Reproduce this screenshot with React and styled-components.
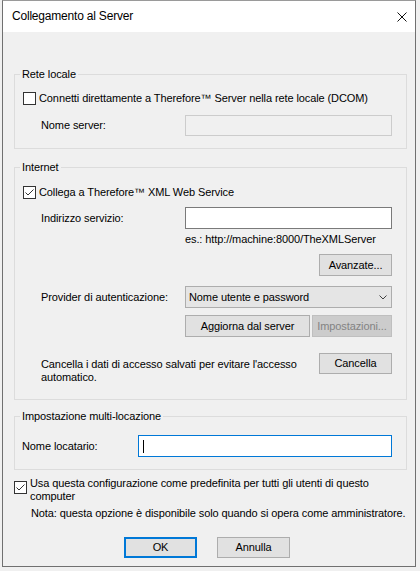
import styled, { createGlobalStyle } from "styled-components";

const GlobalStyle = createGlobalStyle`
  body {
    margin: 0;
    background: #f0f0f0;
    font-family: "Liberation Sans", Arial, sans-serif;
    color: #000;
  }
`;

const Page = styled.div`
  padding-left: 2px;
`;

const Window = styled.div`
  width: 414px;
  height: 567px;
  box-sizing: border-box;
  border: 1px solid #707070;
  border-top-color: #9a9a9a;
  background: #f0f0f0;
  display: flex;
  flex-direction: column;
  font-size: 11px;
  line-height: 13px;
  letter-spacing: -0.1px;
`;

const TitleBar = styled.div`
  height: 31px;
  flex: none;
  background: #fff;
  display: flex;
  align-items: center;
  justify-content: space-between;
  padding: 0 8px 0 9px;
  font-size: 12px;
  letter-spacing: -0.2px;
`;

const CloseIcon = () => (
  <svg width="10" height="10" viewBox="0 0 10 10">
    <path d="M0.5 0.5 L9.5 9.5 M9.5 0.5 L0.5 9.5" stroke="#111" strokeWidth="1" />
  </svg>
);

const Body = styled.div`
  flex: 1;
  display: flex;
  flex-direction: column;
  padding: 36px 8px 0 11px;
`;

const Group = styled.fieldset`
  margin: ${(p) => p.$top || 0}px 0 0 0;
  padding: 0;
  min-width: 0;
  border: 1px solid #dcdcdc;
`;

const Legend = styled.legend`
  margin-left: 5px;
  padding: 0 2px;
  line-height: 13px;
`;

const GroupInner = styled.div`
  display: flex;
  flex-direction: column;
  padding: ${(p) => p.$pad};
`;

const CheckRow = styled.label`
  display: flex;
  align-items: ${(p) => (p.$wrap ? "flex-start" : "center")};
  gap: 3px;
`;

const Box = styled.span`
  flex: none;
  width: 13px;
  height: 13px;
  box-sizing: border-box;
  border: 1px solid #333;
  background: #fff;
  display: flex;
  margin-top: ${(p) => p.$offset || 0}px;
`;

const CheckBox = ({ checked, offset }) => (
  <Box $offset={offset}>
    {checked && (
      <svg width="11" height="11" viewBox="0 0 11 11">
        <path d="M1.5 5.5 L4 8 L9.5 2.5" fill="none" stroke="#333" strokeWidth="1" />
      </svg>
    )}
  </Box>
);

const FieldRow = styled.div`
  display: grid;
  grid-template-columns: ${(p) => p.$label}px ${(p) => p.$field}px;
  align-items: center;
  margin-left: ${(p) => p.$indent || 0}px;
  margin-top: ${(p) => p.$top || 0}px;
`;

const TextBox = styled.div`
  height: ${(p) => p.$h || 22}px;
  box-sizing: border-box;
  border: 1px solid ${(p) => (p.$disabled ? "#cccccc" : p.$focus ? "#0078d7" : "#7a7a7a")};
  background: ${(p) => (p.$disabled ? "#f0f0f0" : "#fff")};
  display: flex;
  align-items: center;
  padding-left: 4px;
`;

const Caret = styled.span`
  width: 1px;
  height: 13px;
  background: #000;
`;

const Hint = styled.div`
  grid-column: 2;
  margin-top: 4px;
`;

const Button = styled.button`
  font: inherit;
  letter-spacing: inherit;
  color: ${(p) => (p.disabled ? "#838383" : "#000")};
  width: ${(p) => p.$w || 73}px;
  height: ${(p) => p.$h || 22}px;
  padding: 0;
  box-sizing: border-box;
  background: ${(p) => (p.disabled ? "#cccccc" : "#e1e1e1")};
  border: ${(p) => (p.$default ? "2px solid #0078d7" : p.disabled ? "1px solid #bfbfbf" : "1px solid #adadad")};
  border-radius: 0;
  text-align: center;
  line-height: 13px;
`;

const RightCell = styled.div`
  grid-column: 2;
  display: flex;
  justify-content: ${(p) => p.$justify || "flex-end"};
  gap: 2px;
  margin-top: ${(p) => p.$top || 0}px;
`;

const Select = styled.div`
  height: 22px;
  box-sizing: border-box;
  border: 1px solid #adadad;
  background: #e5e5e5;
  display: flex;
  align-items: center;
  justify-content: space-between;
  padding: 0 4px 0 3px;
`;

const Chevron = () => (
  <svg width="8" height="5" viewBox="0 0 8 5">
    <path d="M0.5 0.5 L4 4 L7.5 0.5" fill="none" stroke="#404040" strokeWidth="1" />
  </svg>
);

const ClearRow = styled.div`
  display: flex;
  justify-content: space-between;
  align-items: flex-start;
  margin: 16px 0 0 18px;
`;

const ClearText = styled.div`
  margin-top: 5px;
  width: 262px;
`;

const DefaultRow = styled.div`
  margin-top: 7px;
`;

const Note = styled.div`
  margin: 4px 0 0 17px;
`;

const ButtonBar = styled.div`
  display: flex;
  justify-content: center;
  gap: 20px;
  margin-top: 17px;
  padding-right: 7px;
`;

export default function App() {
  return (
    <Page>
      <GlobalStyle />
      <Window>
        <TitleBar>
          <span>Collegamento al Server</span>
          <CloseIcon />
        </TitleBar>
        <Body>
          <Group>
            <Legend>Rete locale</Legend>
            <GroupInner $pad="11px 14px 12px 8px">
              <CheckRow>
                <CheckBox />
                <span>Connetti direttamente a Therefore™ Server nella rete locale (DCOM)</span>
              </CheckRow>
              <FieldRow $label={144} $field={207} $indent={18} $top={10}>
                <span>Nome server:</span>
                <TextBox $disabled $h={21} />
              </FieldRow>
            </GroupInner>
          </Group>

          <Group $top={12}>
            <Legend>Internet</Legend>
            <GroupInner $pad="12px 14px 15px 8px">
              <CheckRow>
                <CheckBox checked />
                <span>Collega a Therefore™ XML Web Service</span>
              </CheckRow>
              <FieldRow $label={144} $field={207} $indent={18} $top={8}>
                <span>Indirizzo servizio:</span>
                <TextBox />
                <Hint>es.: http://machine:8000/TheXMLServer</Hint>
                <RightCell $top={8}>
                  <Button>Avanzate...</Button>
                </RightCell>
              </FieldRow>
              <FieldRow $label={144} $field={207} $indent={18} $top={10}>
                <span>Provider di autenticazione:</span>
                <Select>
                  <span>Nome utente e password</span>
                  <Chevron />
                </Select>
                <RightCell $top={7} $justify="flex-start">
                  <Button $w={125}>Aggiorna dal server</Button>
                  <Button $w={80} disabled>
                    Impostazioni...
                  </Button>
                </RightCell>
              </FieldRow>
              <ClearRow>
                <ClearText>Cancella i dati di accesso salvati per evitare l'accesso automatico.</ClearText>
                <Button $h={21}>Cancella</Button>
              </ClearRow>
            </GroupInner>
          </Group>

          <Group $top={10}>
            <Legend>Impostazione multi-locazione</Legend>
            <GroupInner $pad="12px 14px 12px 7px">
              <FieldRow $label={116} $field={254}>
                <span>Nome locatario:</span>
                <TextBox $focus>
                  <Caret />
                </TextBox>
              </FieldRow>
            </GroupInner>
          </Group>

          <DefaultRow>
            <CheckRow $wrap>
              <CheckBox checked offset={4} />
              <span>Usa questa configurazione come predefinita per tutti gli utenti di questo computer</span>
            </CheckRow>
            <Note>Nota: questa opzione è disponibile solo quando si opera come amministratore.</Note>
          </DefaultRow>

          <ButtonBar>
            <Button $default $h={21}>
              OK
            </Button>
            <Button $h={21}>Annulla</Button>
          </ButtonBar>
        </Body>
      </Window>
    </Page>
  );
}
